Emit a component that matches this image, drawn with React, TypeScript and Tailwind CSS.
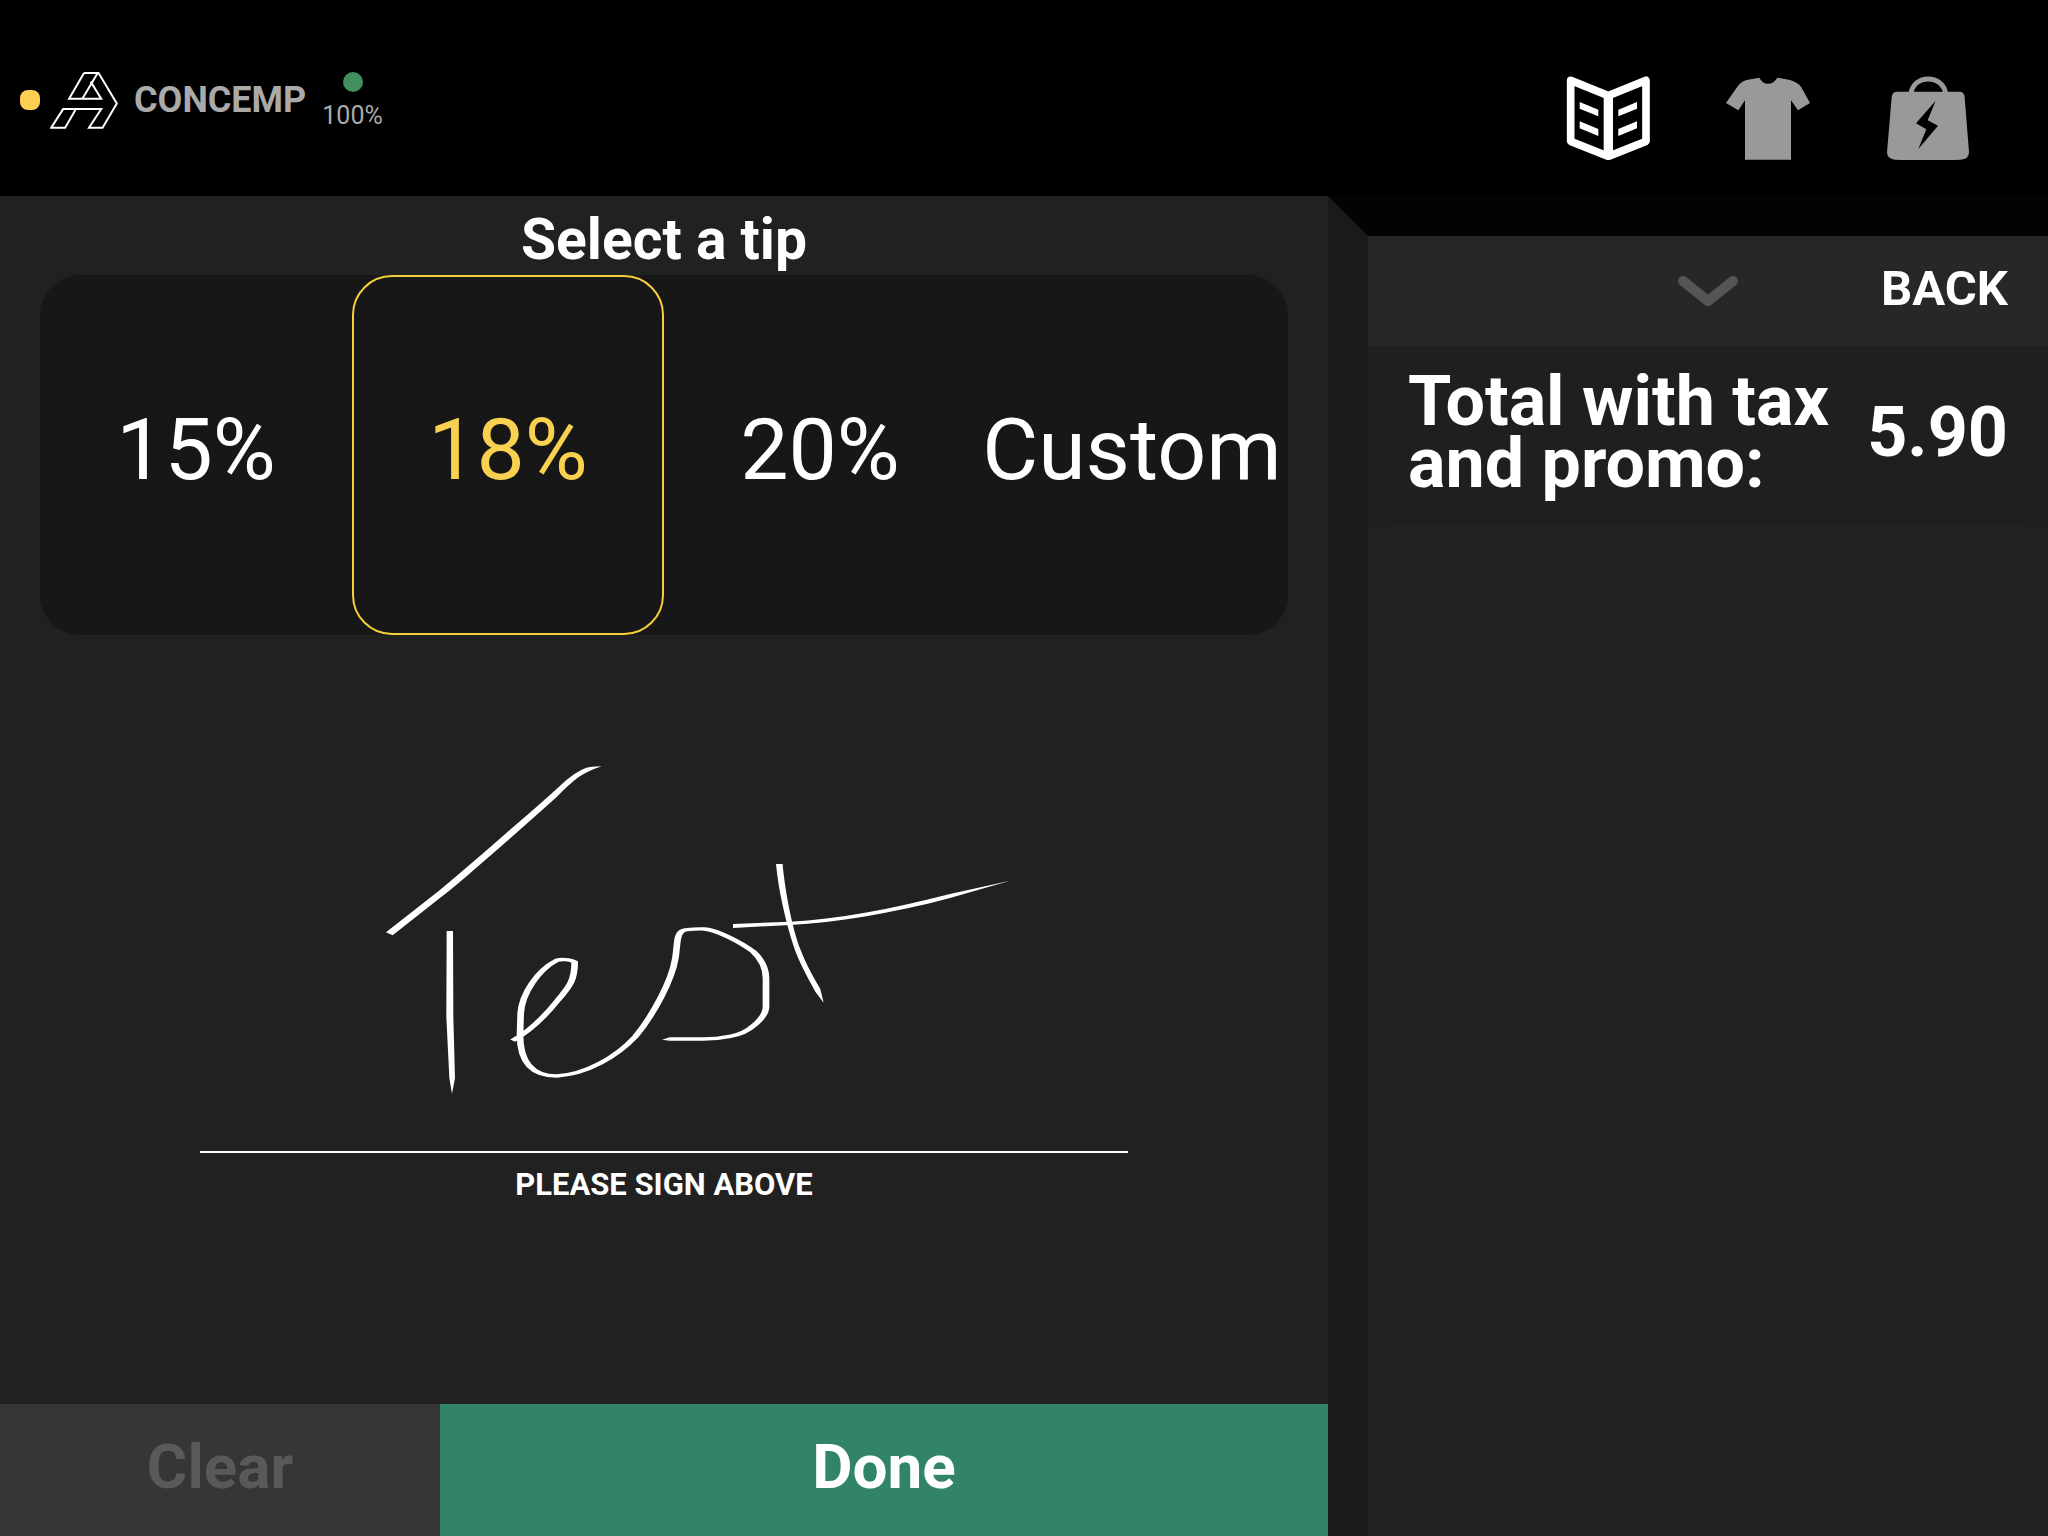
import React, { useState } from 'react';
import clsx from 'clsx';

type TabId = 'menu' | 'merch' | 'quick';

const tips = ['15%', '18%', '20%', 'Custom'];

const Logo = () => (
  <svg viewBox="0 0 204 172" className="h-[57px] w-[68px]" fill="none" stroke="#fff" strokeWidth="6" strokeLinejoin="miter">
    <path d="M102 3 H146 L201 95 L158 168 H117 L154 112 H39 L3 168 H45 L76 115" />
    <path d="M102 3 L57 81 H154 L122 29" />
    <path d="M142 5 L97 81" />
  </svg>
);

const MenuIcon = () => (
  <svg viewBox="0 0 252 252" className="size-[84px]" fill="currentColor">
    <path d="M14 13 L127 59 L240 13 V196 L127 241 L14 196 Z" fill="none" stroke="currentColor" strokeWidth="23" strokeLinejoin="round" />
    <path d="M113 54 H141 V244 H113 Z" />
    <path d="M41 78 L97 101 V121 L41 98 Z" />
    <path d="M41 136 L97 159 V180 L41 157 Z" />
    <path d="M213 78 L157 101 V121 L213 98 Z" />
    <path d="M213 136 L157 159 V180 L213 157 Z" />
  </svg>
);

const ShirtIcon = () => (
  <svg viewBox="0 0 252 252" className="size-[84px]" fill="currentColor">
    <path d="M100 5 Q109 23 126 23 Q144 23 154 5 L192 12 Q214 18 225 32 L252 81 L216 103 L195 73 V251 H57 V73 L37 103 L0 81 L34 32 Q45 17 62 12 Z" />
  </svg>
);

const BagIcon = () => (
  <svg viewBox="0 0 252 252" className="size-[84px]" fill="currentColor">
    <path d="M75 53 C82 -6 170 -6 179 53" fill="none" stroke="currentColor" strokeWidth="15" />
    <path d="M34 47 H220 Q235 47 236 64 L249 229 Q249 250 224 251 Q126 254 26 251 Q3 249 3 229 L17 64 Q18 47 34 47 Z" />
    <path d="M149 74 L90 142 L121 160 L97 219 L156 149 L125 133 Z" fill="#000" />
  </svg>
);

const tabs: { id: TabId; label: string; Icon: React.FC }[] = [
  { id: 'menu', label: 'Menu', Icon: MenuIcon },
  { id: 'merch', label: 'Merchandise', Icon: ShirtIcon },
  { id: 'quick', label: 'Quick order', Icon: BagIcon },
];

// Pen strokes captured on the pad
const Signature = () => (
  <svg viewBox="0 0 1980 1110" className="h-[370px] w-[660px]" fill="#fff" role="img" aria-label="Signature">
    <path d="M48 577 Q130 513 205 454 Q340 340 420 269 Q520 184 590 119 Q635 82 665 80 L695 79 Q655 92 625 112 Q595 135 560 171 Q450 270 325 378 Q250 444 205 478 L68 586 Z" />
    <path d="M230 573 H249 L250 830 L255 1015 L246 1061 L238 1015 L229 830 Z" />
    {/* wide nib: thicker on the downstrokes */}
    <g transform="scale(2 1)">
      <path
        d="M214 902 C240 873 262 830 282 780 C300 738 307 720 307 666 C300 656 284 658 280 661 C252 690 228 760 226 820 L225 885 C225 970 245 1008 280 1008 C325 1003 370 950 398 890 C425 825 453 720 458 655 C462 610 458 572 475 569 Q490 566 502 567 C520 570 555 605 575 635 Q594 670 594 715 V800 C594 830 570 880 540 889 Q520 897 500 897 H449"
        fill="none"
        stroke="#fff"
        strokeWidth="10"
        strokeLinejoin="round"
      />
    </g>
    <path d="M899 892 L876 899 L899 902 Z" />
    <path d="M1218 372 H1238 C1242 430 1264 560 1292 630 C1307 670 1332 715 1351 747 L1361 788 L1336 755 C1308 705 1283 655 1273 625 C1248 550 1225 450 1218 372 Z" />
    <path d="M1089 552 L1260 545 C1400 538 1560 508 1740 462 L1920 422 L1740 474 C1560 522 1400 547 1260 555 L1089 564 Z" />
  </svg>
);

const App = () => {
  const [activeTab, setActiveTab] = useState<TabId>('menu');
  const [tip, setTip] = useState('18%');
  const [signed, setSigned] = useState(true);

  return (
    <div className="flex min-h-screen flex-col bg-[#212121] font-[Roboto,sans-serif] text-white">
      <header className="flex h-[196px] shrink-0 items-center justify-between bg-black px-5">
        <div className="flex items-center pt-1">
          <span className="size-5 rounded-lg bg-[#ffce54]" />
          <div className="ml-[10px]">
            <Logo />
          </div>
          <span className="ml-4 text-[36px] leading-10 font-bold text-[#aaaaaa]">CONCEMP</span>
          <div className="ml-4 flex flex-col items-center gap-2 pt-1">
            <span className="size-5 rounded-full bg-[#3f8f5f]" />
            <span className="text-[25px] leading-8 text-[#aaaaaa]">100%</span>
          </div>
        </div>
        <nav className="flex pt-10 pr-5">
          {tabs.map(({ id, label, Icon }) => (
            <button
              key={id}
              type="button"
              aria-label={label}
              onClick={() => setActiveTab(id)}
              className={clsx('flex w-40 justify-center', activeTab === id ? 'text-white' : 'text-[#999999]')}
            >
              <Icon />
            </button>
          ))}
        </nav>
      </header>

      <div className="flex flex-1">
        <main className="flex flex-1 flex-col">
          <section className="px-10 pt-2">
            <h1 className="text-center text-[57px] leading-[71px] font-bold">Select a tip</h1>
            <div className="grid h-[360px] grid-cols-4 rounded-[40px] bg-[#171717]">
              {tips.map((item) => (
                <button
                  key={item}
                  type="button"
                  aria-pressed={tip === item}
                  onClick={() => setTip(item)}
                  className={clsx(
                    'flex items-center justify-center rounded-[40px] border-2 pb-3 text-[86px]',
                    tip === item ? 'border-[#f7cf3c] text-[#f7d14f]' : 'border-transparent'
                  )}
                >
                  {item}
                </button>
              ))}
            </div>
          </section>

          <section className="flex flex-1 flex-col items-center px-[200px] pt-[105px]">
            <div className="flex h-[413px] w-full justify-center border-b-2 border-white pl-[72px]">
              {signed && <Signature />}
            </div>
            <p className="pt-3 text-[31px] leading-10 font-bold">PLEASE SIGN ABOVE</p>
          </section>

          <footer className="flex h-[132px] text-[62px] font-bold">
            <button type="button" onClick={() => setSigned(false)} className="w-[440px] bg-[#363636] pb-2 text-[#595959]">
              Clear
            </button>
            <button type="button" className="flex-1 bg-[#318566] pb-2">
              Done
            </button>
          </footer>
        </main>

        {/* Bevelled edge comes from the two borders meeting at the corner */}
        <aside className="w-[720px] border-t-[40px] border-l-[40px] border-t-[#030303] border-l-[#1a1a1a]">
          <div className="grid h-[110px] grid-cols-3 items-center bg-[#272727] px-10">
            <button type="button" aria-label="Collapse" className="col-start-2 flex justify-center">
              <svg viewBox="0 0 60 32" className="h-8 w-[60px]" fill="none" stroke="#555" strokeWidth="10" strokeLinecap="round" strokeLinejoin="round">
                <path d="M5 6 L30 26 L55 6" />
              </svg>
            </button>
            <button type="button" className="justify-self-end pb-1 text-[49px] font-bold">
              BACK
            </button>
          </div>
          <div className="flex h-[179px] items-center justify-between bg-[#1f1f1f] px-10 pb-2 text-[70px] leading-[62px] font-bold">
            <p>
              Total with tax
              <br />
              and promo:
            </p>
            <span>5.90</span>
          </div>
          <hr className="mx-[30px] border-t border-[#262626]" />
        </aside>
      </div>
    </div>
  );
};

export default App;
